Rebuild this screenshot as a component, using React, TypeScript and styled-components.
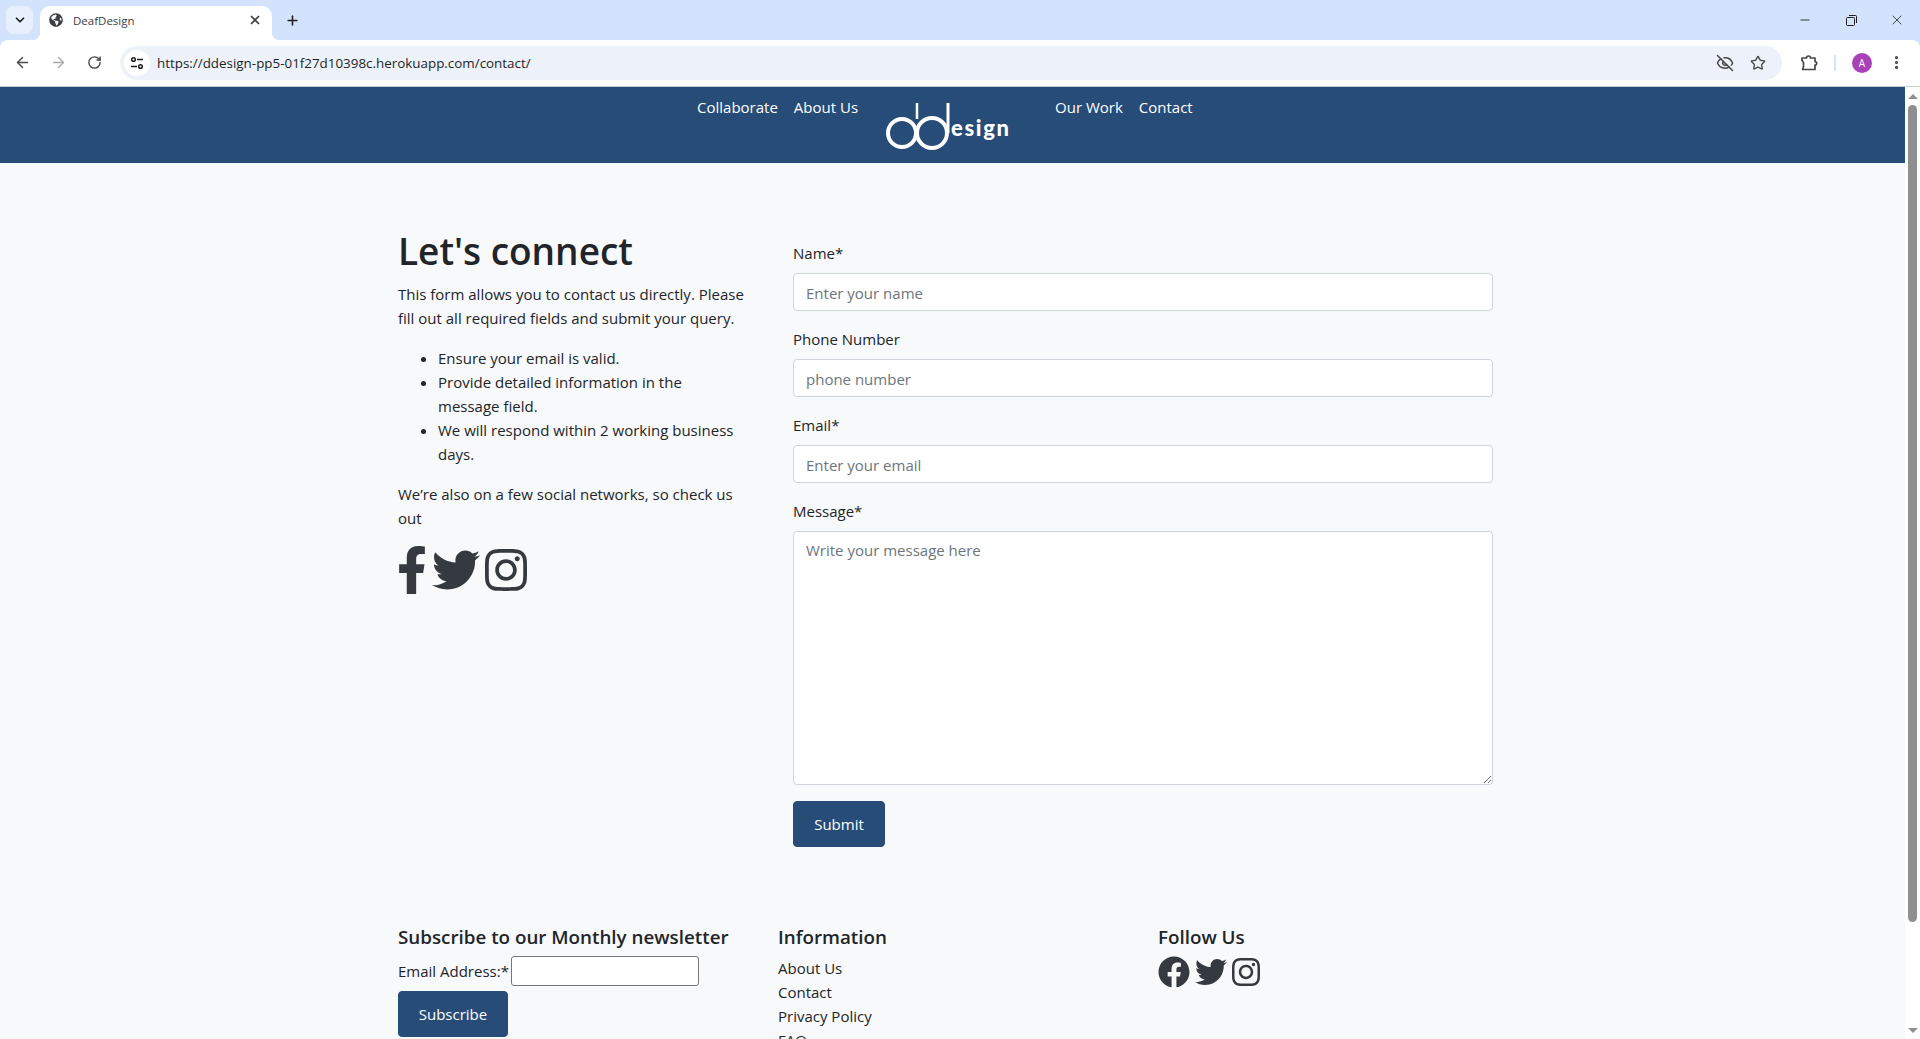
import React from 'react';
import styled, { createGlobalStyle } from 'styled-components';
import { FaFacebook, FaFacebookF, FaGlobeAmericas, FaInstagram, FaTwitter } from 'react-icons/fa';
import { ArrowLeft, ArrowRight, ChevronDown, MoreVertical, Plus, RotateCw, Star, X, EyeOff, Minus } from 'lucide-react';

const NAVY = '#274c77';
const INK = '#212529';
const STRIP = '#d3e3fd';
const FONT = '"Open Sans", "Noto Sans", sans-serif';

const GlobalStyle = createGlobalStyle`
  html, body {
    margin: 0;
    height: 100%;
    overflow: hidden;
    background: #f8f9fa;
  }
  * {
    box-sizing: border-box;
  }
`;

const Shell = styled.div`
  width: 1920px;
  height: 1039px;
  display: flex;
  flex-direction: column;
  overflow: hidden;
  background: ${STRIP};
  font-family: ${FONT};
`;

const TabStrip = styled.div`
  height: 40px;
  flex: none;
  display: flex;
  align-items: flex-end;
  padding-left: 6px;
  color: #1f1f1f;
`;

const TabListButton = styled.div`
  width: 27px;
  height: 28px;
  margin-bottom: 6px;
  border-radius: 8px;
  background: #e8f0fe;
  display: flex;
  align-items: center;
  justify-content: center;
`;

const Tab = styled.div`
  position: relative;
  width: 232px;
  height: 34px;
  margin-left: 7px;
  padding: 0 10px 6px 9px;
  background: #fff;
  border-radius: 10px 10px 0 0;
  display: flex;
  align-items: center;
  gap: 10px;
  font-size: 11.5px;
  color: #3c4043;
  &::before,
  &::after {
    content: '';
    position: absolute;
    bottom: 0;
    width: 8px;
    height: 8px;
  }
  &::before {
    left: -8px;
    background: radial-gradient(circle at 0 0, ${STRIP} 8px, #fff 8.5px);
  }
  &::after {
    right: -8px;
    background: radial-gradient(circle at 100% 0, ${STRIP} 8px, #fff 8.5px);
  }
`;

const TabTitle = styled.span`
  flex: 1;
`;

const NewTab = styled.div`
  width: 40px;
  height: 34px;
  display: flex;
  align-items: center;
  justify-content: center;
  padding-bottom: 6px;
`;

const WindowControls = styled.div`
  margin-left: auto;
  height: 40px;
  display: flex;
  align-items: center;
`;

const WindowButton = styled.div`
  width: 46px;
  height: 40px;
  display: flex;
  align-items: center;
  justify-content: center;
`;

const Toolbar = styled.div`
  height: 47px;
  flex: none;
  background: #fff;
  border-radius: 8px 8px 0 0;
  border-bottom: 1px solid #c9cdd1;
  display: flex;
  align-items: center;
  padding: 0 0 1px 4px;
  color: #474747;
`;

const ToolButton = styled.div<{ $muted?: boolean }>`
  width: 36px;
  height: 34px;
  display: flex;
  align-items: center;
  justify-content: center;
  color: ${(props) => (props.$muted ? '#a9abad' : '#474747')};
`;

const Omnibox = styled.div`
  width: 1662px;
  height: 34px;
  margin: 0 18px 0 8px;
  border-radius: 17px;
  background: #edf2fa;
  display: flex;
  align-items: center;
  padding: 0 8px 0 4px;
`;

const SiteInfo = styled.div`
  width: 26px;
  height: 26px;
  border-radius: 50%;
  background: #fff;
  display: flex;
  align-items: center;
  justify-content: center;
  color: #1f1f1f;
`;

const Url = styled.span`
  flex: 1;
  margin-left: 7px;
  font-size: 13.4px;
  color: #1f1f1f;
`;

const OmniIcon = styled.div`
  width: 33px;
  display: flex;
  justify-content: center;
  color: #474747;
`;

const ExtensionSlot = styled.div`
  width: 18px;
  display: flex;
  justify-content: center;
`;

const ToolDivider = styled.div`
  width: 2px;
  height: 16px;
  margin: 0 16px;
  background: ${STRIP};
`;

const Avatar = styled.div`
  width: 20px;
  height: 20px;
  border-radius: 50%;
  background: #a942b8;
  color: #fff;
  font-size: 10px;
  display: flex;
  align-items: center;
  justify-content: center;
`;

const MenuButton = styled.div`
  margin-left: 16px;
  display: flex;
  color: #474747;
`;

const Viewport = styled.div`
  flex: 1;
  min-height: 0;
  display: flex;
`;

const Page = styled.div`
  width: 1905px;
  overflow: hidden;
  background: #f8f9fa;
  color: ${INK};
  font-size: 15px;
  line-height: 24px;
`;

const Scrollbar = styled.div`
  width: 15px;
  background: #fff;
  display: flex;
  flex-direction: column;
  align-items: center;
`;

const ScrollArrow = styled.div`
  height: 18px;
  flex: none;
  display: flex;
  align-items: center;
  justify-content: center;
`;

const ArrowTriangle = styled.div<{ $down?: boolean }>`
  width: 0;
  height: 0;
  border-left: 5px solid transparent;
  border-right: 5px solid transparent;
  border-bottom: ${(props) => (props.$down ? '0' : '5px solid #8f8f8f')};
  border-top: ${(props) => (props.$down ? '5px solid #8f8f8f' : '0')};
`;

const ScrollThumb = styled.div`
  width: 9px;
  height: 817px;
  margin-bottom: auto;
  border-radius: 5px;
  background: #8f8f8f;
`;

const Header = styled.header`
  height: 76px;
  background: ${NAVY};
  display: flex;
  align-items: flex-start;
  padding: 8px 0 0 697px;
`;

const NavLink = styled.a`
  color: #fff;
  text-decoration: none;
  font-size: 15px;
  margin-right: 16px;
  white-space: nowrap;
`;

const LogoSlot = styled.div`
  width: 181px;
  height: 68px;
  padding: 6px 0 0 10px;
`;

const Main = styled.main`
  display: grid;
  grid-template-columns: 395px 700px;
  padding: 64px 0 0 398px;
`;

const Intro = styled.section`
  padding-right: 48px;
`;

const Title = styled.h1`
  margin: 0 0 7px;
  font-size: 37px;
  line-height: 48px;
  font-weight: 600;
`;

const Text = styled.p`
  margin: 0 0 16px;
`;

const Bullets = styled.ul`
  margin: 0 0 16px;
  padding-left: 40px;
`;

const IconRow = styled.div<{ $size: number }>`
  display: flex;
  gap: 5px;
  color: #343a40;
  font-size: ${(props) => props.$size}px;
  line-height: 1;
`;

const FacebookIcon = styled(FaFacebookF)`
  width: 0.625em;
  margin-left: -1px;
`;

const InstagramIcon = styled(FaInstagram)`
  width: 0.875em;
`;

const ContactForm = styled.form`
  padding-top: 14px;
`;

const Field = styled.div`
  margin-bottom: 16px;
`;

const FieldLabel = styled.label`
  display: block;
  margin-bottom: 8px;
`;

const TextInput = styled.input`
  display: block;
  width: 100%;
  height: 38px;
  padding: 7px 12px 5px;
  font: 15px/24px ${FONT};
  color: ${INK};
  background: #fff;
  border: 1px solid #ced4da;
  border-radius: 4px;
  &::placeholder {
    color: #6c757d;
    opacity: 1;
  }
`;

const MessageInput = styled.textarea`
  display: block;
  width: 100%;
  height: 254px;
  padding: 6px 12px;
  font: 15px/24px ${FONT};
  background: #fff;
  border: 1px solid #ced4da;
  border-radius: 4px;
  &::placeholder {
    color: #6c757d;
    opacity: 1;
  }
`;

const PrimaryButton = styled.button<{ $wide?: boolean }>`
  display: block;
  width: ${(props) => (props.$wide ? '110px' : '92px')};
  height: 46px;
  background: ${NAVY};
  color: #fff;
  border: 1px solid ${NAVY};
  border-radius: 4px;
  font: 15px/24px ${FONT};
  padding: 0;
`;

const Footer = styled.footer`
  display: grid;
  grid-template-columns: 380px 380px 380px;
  padding: 78px 0 0 398px;
`;

const FooterTitle = styled.h5`
  margin: 0 0 7px;
  font-size: 18.8px;
  line-height: 24px;
  font-weight: 600;
`;

const FooterLinks = styled.div`
  display: flex;
  flex-direction: column;
`;

const FooterLink = styled.a`
  color: ${INK};
  text-decoration: none;
`;

const NewsletterRow = styled.div`
  display: flex;
  align-items: center;
  gap: 2px;
  height: 30px;
  margin-bottom: 5px;
`;

const NewsletterInput = styled.input`
  width: 188px;
  height: 30px;
  background: #fff;
  border: 1px solid #767676;
  border-radius: 3px;
`;

const Logo = () => (
  <svg width="130" height="56" viewBox="0 0 130 56" fill="none">
    <g stroke="#fff">
      <circle cx="18" cy="32" r="14" strokeWidth="4" />
      <circle cx="48" cy="32" r="15" strokeWidth="4" />
      <path d="M33 2v16" strokeWidth="2.5" />
      <path d="M64 2v30" strokeWidth="3" />
    </g>
    <text
      x="67"
      y="35"
      fill="#fff"
      fontFamily="Lato, sans-serif"
      fontSize="22"
      fontWeight="900"
      textLength="58"
      lengthAdjust="spacing"
    >
      esign
    </text>
  </svg>
);

const SiteInfoIcon = () => (
  <svg width="14" height="14" viewBox="0 0 14 14" fill="none" stroke="currentColor" strokeWidth="1.5">
    <circle cx="3.5" cy="3.5" r="1.8" />
    <path d="M7 3.5h6" />
    <circle cx="10.5" cy="10.5" r="1.8" />
    <path d="M1 10.5h6" />
  </svg>
);

const ExtensionIcon = () => (
  <svg width="18" height="18" viewBox="0 0 18 18" fill="none" stroke="#474747" strokeWidth="1.7" strokeLinejoin="round">
    <path d="M2 4h4.5a2 2 0 0 1 4 0H15v3.6a1.7 1.7 0 0 1 0 3.4V15.5H2.6v-.5l.9-2V8.5L2 6.5z" />
  </svg>
);

const App = () => {
  return (
    <Shell>
      <GlobalStyle />
      <TabStrip>
        <TabListButton>
          <ChevronDown size={14} strokeWidth={3} />
        </TabListButton>
        <Tab>
          <FaGlobeAmericas size={14} />
          <TabTitle>DeafDesign</TabTitle>
          <X size={14} strokeWidth={3} />
        </Tab>
        <NewTab>
          <Plus size={15} strokeWidth={2.5} />
        </NewTab>
        <WindowControls>
          <WindowButton>
            <Minus size={14} strokeWidth={1.5} />
          </WindowButton>
          <WindowButton>
            <svg width="11" height="11" viewBox="0 0 11 11" fill="none" stroke="#1f1f1f">
              <rect x="0.5" y="2.5" width="8" height="8" rx="1" />
              <path d="M3 .5h6.5a1 1 0 0 1 1 1V8" />
            </svg>
          </WindowButton>
          <WindowButton>
            <X size={16} strokeWidth={1.2} />
          </WindowButton>
        </WindowControls>
      </TabStrip>
      <Toolbar>
        <ToolButton>
          <ArrowLeft size={17} strokeWidth={2} />
        </ToolButton>
        <ToolButton $muted>
          <ArrowRight size={17} strokeWidth={2} />
        </ToolButton>
        <ToolButton>
          <RotateCw size={15} strokeWidth={2.2} />
        </ToolButton>
        <Omnibox>
          <SiteInfo>
            <SiteInfoIcon />
          </SiteInfo>
          <Url>https://ddesign-pp5-01f27d10398c.herokuapp.com/contact/</Url>
          <OmniIcon>
            <EyeOff size={18} strokeWidth={2} />
          </OmniIcon>
          <OmniIcon>
            <Star size={16} strokeWidth={2} />
          </OmniIcon>
        </Omnibox>
        <ExtensionSlot>
          <ExtensionIcon />
        </ExtensionSlot>
        <ToolDivider />
        <Avatar>A</Avatar>
        <MenuButton>
          <MoreVertical size={17} strokeWidth={2.5} />
        </MenuButton>
      </Toolbar>
      <Viewport>
        <Page>
          <Header>
            <NavLink href="#">Collaborate</NavLink>
            <NavLink href="#">About Us</NavLink>
            <LogoSlot>
              <Logo />
            </LogoSlot>
            <NavLink href="#">Our Work</NavLink>
            <NavLink href="#">Contact</NavLink>
          </Header>
          <Main>
            <Intro>
              <Title>Let's connect</Title>
              <Text>
                This form allows you to contact us directly. Please fill out all required fields and submit your query.
              </Text>
              <Bullets>
                <li>Ensure your email is valid.</li>
                <li>Provide detailed information in the message field.</li>
                <li>We will respond within 2 working business days.</li>
              </Bullets>
              <Text>We’re also on a few social networks, so check us out</Text>
              <IconRow $size={48}>
                <FacebookIcon />
                <FaTwitter />
                <InstagramIcon />
              </IconRow>
            </Intro>
            <ContactForm>
              <Field>
                <FieldLabel>Name*</FieldLabel>
                <TextInput placeholder="Enter your name" />
              </Field>
              <Field>
                <FieldLabel>Phone Number</FieldLabel>
                <TextInput placeholder="phone number" />
              </Field>
              <Field>
                <FieldLabel>Email*</FieldLabel>
                <TextInput placeholder="Enter your email" />
              </Field>
              <Field>
                <FieldLabel>Message*</FieldLabel>
                <MessageInput placeholder="Write your message here" />
              </Field>
              <PrimaryButton type="button">Submit</PrimaryButton>
            </ContactForm>
          </Main>
          <Footer>
            <div>
              <FooterTitle>Subscribe to our Monthly newsletter</FooterTitle>
              <NewsletterRow>
                <span>Email Address:*</span>
                <NewsletterInput />
              </NewsletterRow>
              <PrimaryButton type="button" $wide>
                Subscribe
              </PrimaryButton>
            </div>
            <div>
              <FooterTitle>Information</FooterTitle>
              <FooterLinks>
                <FooterLink href="#">About Us</FooterLink>
                <FooterLink href="#">Contact</FooterLink>
                <FooterLink href="#">Privacy Policy</FooterLink>
                <FooterLink href="#">FAQ</FooterLink>
              </FooterLinks>
            </div>
            <div>
              <FooterTitle>Follow Us</FooterTitle>
              <IconRow $size={32}>
                <FaFacebook />
                <FaTwitter />
                <InstagramIcon />
              </IconRow>
            </div>
          </Footer>
        </Page>
        <Scrollbar>
          <ScrollArrow>
            <ArrowTriangle />
          </ScrollArrow>
          <ScrollThumb />
          <ScrollArrow>
            <ArrowTriangle $down />
          </ScrollArrow>
        </Scrollbar>
      </Viewport>
    </Shell>
  );
};

export default App;
